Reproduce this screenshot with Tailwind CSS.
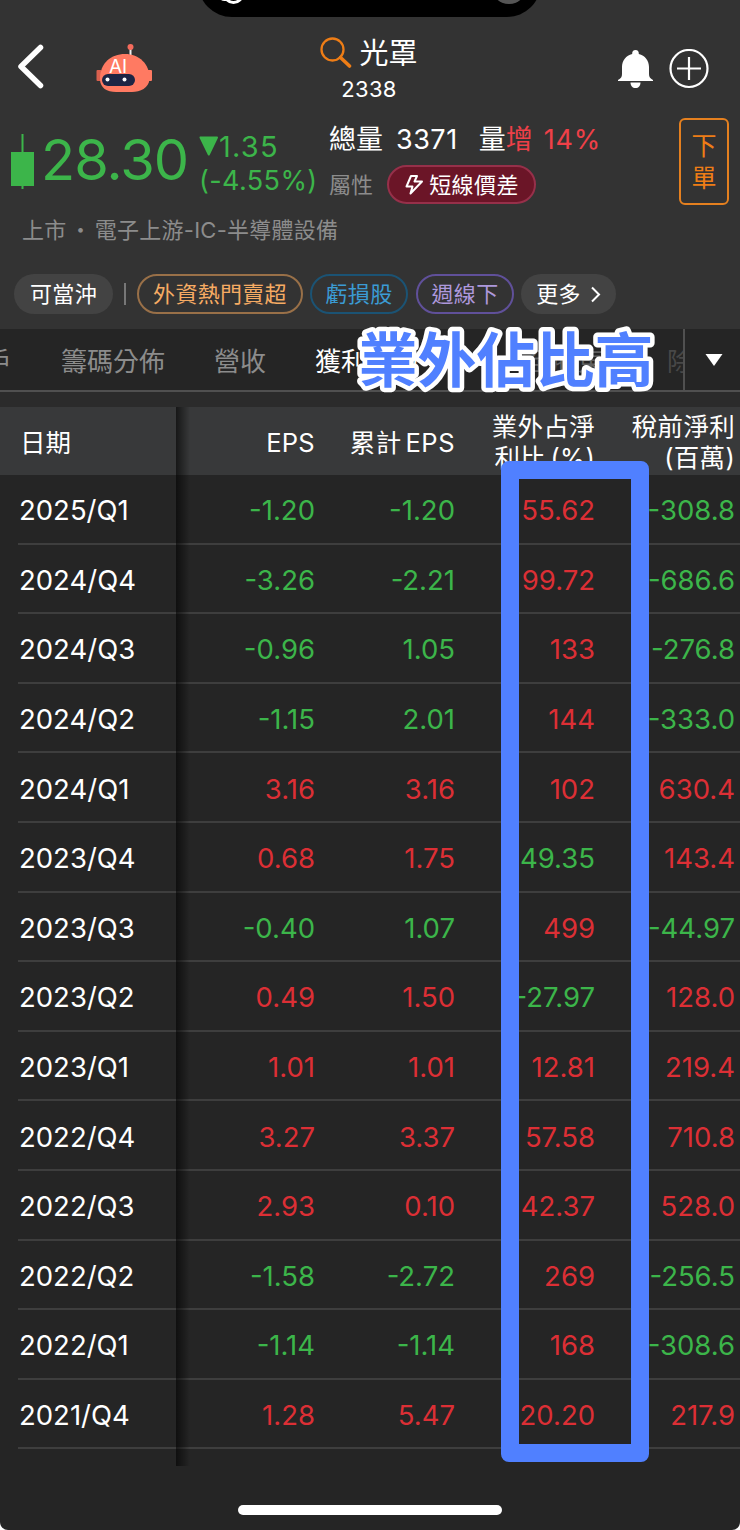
<!DOCTYPE html>
<html lang="zh-Hant">

<head>
  <meta charset="UTF-8" />
  <meta name="viewport" content="width=device-width, initial-scale=1.0" />
  <title>光罩 2338</title>
  <script src="https://cdn.jsdelivr.net/npm/@tailwindcss/browser@4"></script>
</head>

<body class="bg-white font-['Inter','Noto_Sans_CJK_TC',sans-serif] font-[385]">

  <div class="relative w-[740px] h-[1530px] overflow-hidden rounded-b-lg bg-[#252525] text-white">

    <!-- Dynamic island -->
    <div class="absolute -top-8 left-[198px] w-[343px] h-[49px] rounded-b-[34px] bg-black overflow-hidden">
      <div class="absolute left-[20px] top-[20px] w-[15px] h-[13px] rounded-full bg-white"></div>
      <div class="absolute left-[25px] top-[15px] w-[21px] h-[21px] rounded-full border-[3px] border-white bg-black"></div>
      <div class="absolute left-[293px] top-[0px] w-[36px] h-[36px] rounded-full bg-[#555]"></div>
    </div>

    <div class="h-[329px] bg-[#333]">
      <!-- Nav -->
      <div class="h-[118px] pt-[36px] pl-[17px] pr-[31px] flex justify-between">
        <div class="w-[237px] flex items-start">
          <svg class="mt-[8px] w-[28px] h-[46px]" viewBox="0 0 28 46" fill="none" stroke="#fff" stroke-width="5.5" stroke-linecap="round" stroke-linejoin="round">
            <path d="M23.500 3.500L4 22.500L23.500 41.500" />
          </svg>
          <svg class="ml-[51px] mt-[7px] w-[58px] h-[52px]" viewBox="0 0 58 52">
            <path d="M34.500 5V13" stroke="#eee" stroke-width="2" />
            <circle cx="34.500" cy="4" r="3" fill="#f56b5c" />
            <rect x="0.500" y="27" width="5" height="11" rx="1" fill="#d9604e" />
            <rect x="50" y="27" width="6" height="11" rx="1" fill="#ff7a62" />
            <path d="M4 36C4 20 15 11 29 11C43 11 54 21 53.500 36C53 45 44 49 36 49H20C11 49 4 45 4 36Z" fill="#ff7a62" />
            <rect x="6" y="31" width="33" height="12" rx="6" fill="#1d2544" />
            <circle cx="11.500" cy="36.500" r="2" fill="#fff" />
            <circle cx="28.500" cy="36.500" r="2" fill="#fff" />
            <text x="13" y="30" font-family="Inter" font-size="19" font-weight="400" fill="#fff">AI</text>
          </svg>
        </div>
        <div class="flex flex-col items-center">
          <div class="flex items-center gap-[7px] h-[33px]">
            <svg class="w-[32px] h-[32px]" viewBox="0 0 32 32" fill="none" stroke="#ee7d16">
              <circle cx="12.500" cy="12.500" r="11" stroke-width="2.300" />
              <path d="M20.500 20.500L29.500 29" stroke-width="3.600" stroke-linecap="round" />
            </svg>
            <span class="pt-[3px] text-[29px] leading-[32px]">光罩</span>
          </div>
          <span class="mt-[5px] text-[22px] leading-[30px] tracking-[0.3px]">2338</span>
        </div>
        <div class="w-[225px] pt-[13px] flex justify-end gap-[15px]">
          <svg class="w-[37px] h-[40px]" viewBox="0 0 37 40" fill="#fff">
            <path d="M18.500 1C20.700 1 22 2.500 21.800 5C28 6.500 32 11.500 32 18V25C32 28 33 29.500 36 31V32H1V31C4 29.500 5 28 5 25V18C5 11.500 9 6.500 15.200 5C15 2.500 16.300 1 18.500 1Z" />
            <path d="M13.500 33.500H23.500C23.500 37 21.500 39 18.500 39C15.500 39 13.500 37 13.500 33.500Z" />
          </svg>
          <svg class="w-[40px] h-[40px]" viewBox="0 0 40 40" fill="none" stroke="#fff" stroke-width="2.200">
            <circle cx="20" cy="19.500" r="18.500" />
            <path d="M8 19.500H32M20 8V31" />
          </svg>
        </div>
      </div>

      <!-- Quote -->
      <div class="h-[88px] pl-[11px] pr-[11px] flex">
        <svg class="mt-[16px] w-[23px] h-[56px]" viewBox="0 0 23 56" fill="#3cb54a">
          <rect x="10.500" y="0" width="2" height="55" />
          <rect x="0" y="18" width="23" height="34" />
        </svg>
        <div class="ml-[7px] w-[158px] pt-[12px] text-[56px] leading-[60px] tracking-[-1px] text-[#3cb54a]">28.30</div>
        <div class="w-[130px] pt-[12px] text-[#3cb54a]">
          <div class="flex items-center h-[33px]">
            <svg class="w-[20px] h-[20px] mb-[2px]" viewBox="0 0 20 20"><path d="M1.500 1.500H18L9.800 18.500Z" fill="#3cb54a" stroke="#3cb54a" stroke-width="2" stroke-linejoin="round" /></svg>
            <span class="text-[29px] tracking-[1.2px]">1.35</span>
          </div>
          <div class="pt-[1px] text-[27px] leading-[33px] tracking-[0.4px] whitespace-nowrap">(-4.55%)</div>
        </div>
        <div class="w-[350px]">
          <div class="flex h-[44px] items-center text-[27px] whitespace-nowrap">
            <span>總量</span><span class="ml-[13px] tracking-[0.5px]">3371</span><span class="ml-[21px]">量</span><span class="text-[#ef4048]">增</span><span class="ml-[11px] tracking-[0.8px] text-[#ef4048]">14%</span>
          </div>
          <div class="mt-[3px] flex items-center gap-[14px]">
            <span class="text-[22px] leading-[30px] text-[#8c8c8c]">屬性</span>
            <div class="flex h-[39px] w-[149px] items-center justify-center gap-[5px] rounded-full border-2 border-[#96304a] bg-[#6b1527]">
              <svg class="w-[20px] h-[22px]" viewBox="0 0 20 22" fill="none" stroke="#fff" stroke-width="2" stroke-linejoin="round"><path d="M7 2H13L10.500 7.500H18L6.500 19.500L8.500 12.500H2.500Z" /></svg>
              <span class="text-[22px] leading-[30px] tracking-[0.4px]">短線價差</span>
            </div>
          </div>
        </div>
        <div class="flex h-[87px] w-[50px] flex-col items-center justify-center rounded-md border-2 border-[#e5801f] text-[25px] leading-[32px] text-[#ee7d16]">
          <span>下</span><span>單</span>
        </div>
      </div>
      <div class="h-[68px] pl-[22px] pt-[9px] text-[22px] leading-[30px] tracking-[0.25px] text-[#8c8c8c]">上市<span class="mx-[3px]">・</span>電子上游-IC-半導體設備</div>

      <!-- Tags -->
      <div class="flex h-[40px] items-center pl-[14px] text-[22px] leading-[30px] tracking-[0.3px] whitespace-nowrap">
        <div class="flex h-[40px] w-[99px] items-center justify-center rounded-full bg-[#434343]">可當沖</div>
        <div class="ml-[11px] h-[22px] w-[2px] bg-[#777]"></div>
        <div class="ml-[11px] flex h-[40px] w-[166px] items-center justify-center rounded-full border-2 border-[#997048] text-[#f6ab63]">外資熱門賣超</div>
        <div class="ml-[7px] flex h-[40px] w-[98px] items-center justify-center rounded-full border-2 border-[#1b5374] text-[#3b9bd3]">虧損股</div>
        <div class="ml-[8px] flex h-[40px] w-[98px] items-center justify-center rounded-full border-2 border-[#60509a] text-[#ad98dc]">週線下</div>
        <div class="ml-[7px] flex h-[40px] w-[95px] items-center justify-center gap-[9px] rounded-full bg-[#434343]">
          <span>更多</span>
          <svg class="w-[11px] h-[17px]" viewBox="0 0 11 17" fill="none" stroke="#fff" stroke-width="2"><path d="M2 1.500L9 8.500L2 15.500" /></svg>
        </div>
      </div>
    </div>

    <!-- Tabs -->
    <div class="flex h-[63px] border-b-2 border-[#505050] text-[26px] text-[#8c8c8c]">
      <div class="flex w-[685px] items-center gap-[49px] overflow-hidden border-r-2 border-[#505050] pt-[3px] whitespace-nowrap">
        <span class="-ml-[40px] w-[52px] shrink-0 text-right">散戶</span>
        <span>籌碼分佈</span>
        <span>營收</span>
        <span class="text-white">獲利能力</span>
        <span class="w-[150px] shrink-0 pr-[14px] text-right text-[#606060]">至股東</span>
        <span class="text-[#484848]">除權息</span>
      </div>
      <div class="flex flex-1 items-center justify-center">
        <svg class="ml-[2px] w-[18px] h-[14px]" viewBox="0 0 18 14" fill="#fff"><path d="M0.500 1H17.500L9 13Z" /></svg>
      </div>
    </div>
    <div class="h-[15px] bg-[#2b2b2b]"></div>

    <!-- Profit table -->
    <div class="relative h-[1059px]">
      <div class="grid h-[68px] grid-cols-[176px_139px_140px_140px_140px] items-center bg-[#38393a] pt-[2px] text-right text-[25.5px] leading-[31px]">
        <span class="pl-[20px] text-left">日期</span>
        <span class="tracking-[0.3px]">EPS</span>
        <span class="tracking-[0.5px] [word-spacing:-4px]">累計 EPS</span>
        <span class="tracking-[0.3px] [word-spacing:-3px]">業外占淨<br />利比 (%)</span>
        <span class="tracking-[0.3px]">稅前淨利<br />(百萬)</span>
      </div>
      <div id="rows"></div>
      <!-- shadow of the pinned date column -->
      <div class="absolute left-[176px] top-0 h-full w-[14px] bg-linear-to-r from-black/60 to-transparent"></div>
    </div>

    <!-- Home indicator -->
    <div class="mx-auto mt-[39px] h-[10px] w-[264px] rounded-full bg-white"></div>

    <!-- Annotation -->
    <div class="absolute left-[501px] top-[461px] h-[1001px] w-[148px] rounded-lg border-[18px] border-[#5080ff]"></div>
    <svg class="absolute left-[350px] top-[320px] h-[80px] w-[320px]" viewBox="0 0 320 80">
      <text x="8.500" y="62" font-size="59" font-weight="700" fill="#5080ff" stroke="#fff" stroke-width="9" stroke-linejoin="round" paint-order="stroke">業外佔比高</text>
    </svg>
  </div>

  <script>
    const rows = [
      ["2025/Q1", "-1.20", "-1.20", "55.62", "-308.8"],
      ["2024/Q4", "-3.26", "-2.21", "99.72", "-686.6"],
      ["2024/Q3", "-0.96", "1.05", "133", "-276.8"],
      ["2024/Q2", "-1.15", "2.01", "144", "-333.0"],
      ["2024/Q1", "3.16", "3.16", "102", "630.4"],
      ["2023/Q4", "0.68", "1.75", "49.35", "143.4"],
      ["2023/Q3", "-0.40", "1.07", "499", "-44.97"],
      ["2023/Q2", "0.49", "1.50", "-27.97", "128.0"],
      ["2023/Q1", "1.01", "1.01", "12.81", "219.4"],
      ["2022/Q4", "3.27", "3.37", "57.58", "710.8"],
      ["2022/Q3", "2.93", "0.10", "42.37", "528.0"],
      ["2022/Q2", "-1.58", "-2.72", "269", "-256.5"],
      ["2022/Q1", "-1.14", "-1.14", "168", "-308.6"],
      ["2021/Q4", "1.28", "5.47", "20.20", "217.9"],
    ];
    // values drawn in green, by period and column, besides the negative ones
    const green = ["2024/Q3-2", "2024/Q2-2", "2023/Q4-3", "2023/Q3-2"];

    document.getElementById("rows").innerHTML = rows.map(row => `
      <div class="ml-[18px] grid h-[69.6px] grid-cols-[158px_139px_140px_140px_140px] items-center border-b-2 border-[#3e3e3e] pt-[4px] text-right text-[27.5px]">
        <span class="pl-[1px] text-left">${row[0]}</span>
        ${row.slice(1).map((v, i) => {
          const isGreen = v.startsWith("-") || green.includes(`${row[0]}-${i + 1}`);
          return `<span class="${isGreen ? "text-[#3cb54a]" : "text-[#dc2f35]"}">${v}</span>`;
        }).join("")}
      </div>`).join("");
  </script>

</body>

</html>
